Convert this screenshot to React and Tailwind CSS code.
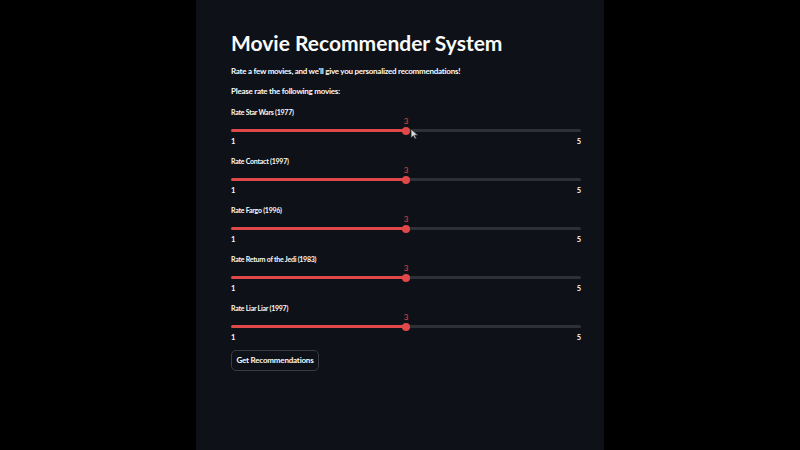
const movies = [
  "Star Wars (1977)",
  "Contact (1997)",
  "Fargo (1996)",
  "Return of the Jedi (1983)",
  "Liar Liar (1997)",
];

function RatingSlider({ title, showCursor }) {
  return (
    <div className="flex flex-col">
      <div className="h-[10px] text-[7px] leading-[10px] font-bold tracking-[-0.25px] text-[#fafafa]">
        Rate {title}
      </div>
      <div className="relative h-[9px]">
        <span className="absolute left-1/2 top-0 -translate-x-1/2 text-[8px] leading-[9px] text-[#e0484a]">3</span>
      </div>
      <div className="relative flex h-[9px] items-center">
        <div className="flex h-[3px] w-full rounded-full">
          <div className="h-full w-1/2 rounded-l-full bg-[#e0484a]" />
          <div className="h-full w-1/2 rounded-r-full bg-[#2f3035]" />
        </div>
        <div className="absolute left-1/2 h-[8px] w-[8px] -translate-x-1/2 rounded-full bg-[#e0484a]" />
        {showCursor && (
          <svg className="absolute left-[179px] top-[2px]" width="9" height="12" viewBox="0 0 9 12">
            <path d="M1 1 L1 10 L3.3 7.8 L5 11 L6.4 10.3 L4.8 7.2 L8 7.2 Z" fill="#d8d8d8" stroke="#222" strokeWidth="0.8" />
          </svg>
        )}
      </div>
      <div className="flex h-[13px] items-center justify-between text-[7.5px] font-bold text-[#fafafa]">
        <span>1</span>
        <span>5</span>
      </div>
    </div>
  );
}

export default function App() {
  return (
    <div className="h-[450px] w-[800px] bg-black" style={{ fontFamily: "Lato, 'Open Sans', sans-serif" }}>
      <div className="mx-auto flex h-full w-[408px] flex-col bg-[#0e1117] pl-[35px] pr-[23px] pt-[29px]">
        <h1 className="h-[28px] text-[21px] leading-[28px] font-bold text-[#fafafa]">
          Movie Recommender System
        </h1>
        <p className="mt-[8px] h-[12px] text-[8px] leading-[12px] font-bold tracking-[-0.25px] text-[#fafafa]">
          Rate a few movies, and we'll give you personalized recommendations!
        </p>
        <p className="mt-[8px] h-[12px] text-[8px] leading-[12px] font-bold tracking-[-0.25px] text-[#fafafa]">
          Please rate the following movies:
        </p>
        <div className="mt-[10px] flex flex-col gap-[8px]">
          {movies.map((m, i) => (
            <RatingSlider key={m} title={m} showCursor={i === 0} />
          ))}
        </div>
        <div className="mt-[1px]">
          <button className="h-[21px] w-[88px] rounded-[5px] border border-[#3a3c44] text-[8px] font-bold tracking-[-0.2px] text-[#fafafa]">
            Get Recommendations
          </button>
        </div>
      </div>
    </div>
  );
}
